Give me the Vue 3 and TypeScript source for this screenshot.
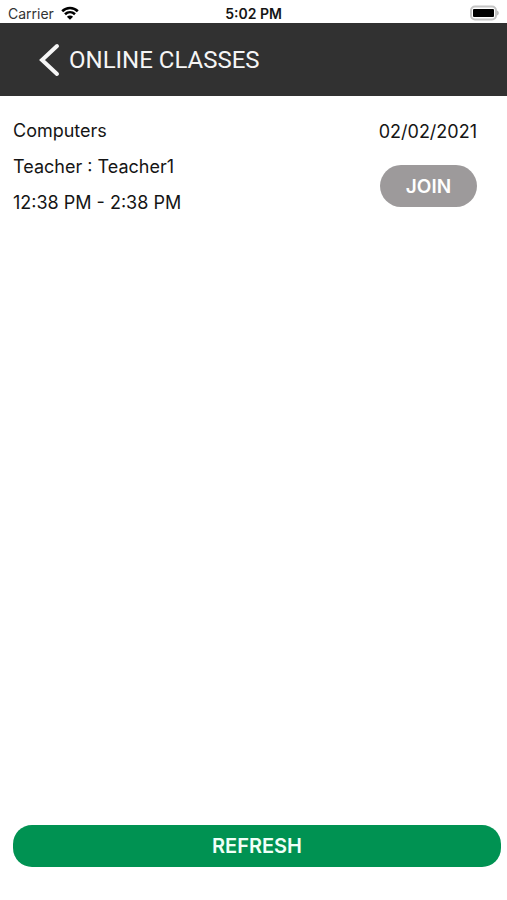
<script setup lang="ts">
import { ref } from 'vue'

interface OnlineClass {
  id: number
  subject: string
  teacher: string
  time: string
  date: string
}

const loadClasses = (): OnlineClass[] => [
  { id: 1, subject: 'Computers', teacher: 'Teacher1', time: '12:38 PM - 2:38 PM', date: '02/02/2021' },
]

const classes = ref<OnlineClass[]>(loadClasses())

function refresh(): void {
  classes.value = loadClasses()
}
</script>

<template>
  <div class="screen">
    <div class="status">
      <div class="carrier">
        <span>Carrier</span>
        <svg class="wifi" viewBox="0 0 18 14" aria-hidden="true">
          <path d="M1.2 5.2C5.6.9 12.4.9 16.8 5.2" />
          <path d="M4 8.3c2.9-2.7 7.1-2.7 10 0" />
          <path class="dot" d="M9 13.8 5.9 10.7c1.7-1.6 4.5-1.6 6.2 0Z" />
        </svg>
      </div>
      <span class="clock">5:02 PM</span>
      <svg class="battery" viewBox="0 0 30 16" aria-hidden="true">
        <rect class="shell" x="2" y="1.5" width="25" height="13" rx="4" />
        <rect x="4" y="4" width="21" height="8" rx="1" />
        <path class="cap" d="M28 5.5c2.4.8 2.4 4.2 0 5Z" />
      </svg>
    </div>

    <header class="bar">
      <button class="back" type="button" aria-label="Back">
        <svg viewBox="0 0 22 36" aria-hidden="true">
          <path d="M18 4 3 18l15 14" />
        </svg>
      </button>
      <h1>ONLINE CLASSES</h1>
    </header>

    <main class="list">
      <article v-for="item in classes" :key="item.id" class="row">
        <div class="details">
          <h2>{{ item.subject }}</h2>
          <p>Teacher : {{ item.teacher }}</p>
          <p>{{ item.time }}</p>
        </div>
        <div class="side">
          <span>{{ item.date }}</span>
          <button class="join" type="button">JOIN</button>
        </div>
      </article>
    </main>

    <footer class="actions">
      <button class="refresh" type="button" @click="refresh">REFRESH</button>
    </footer>
  </div>
</template>

<style>
body {
  margin: 0;
  background: #fff;
}
</style>

<style scoped>
.screen {
  display: flex;
  flex-direction: column;
  min-height: 100vh;
  color: #151515;
  font-family: Inter, "Liberation Sans", sans-serif;
  font-size: 18px;
}

button {
  border: 0;
  padding: 0;
  font-family: inherit;
  cursor: pointer;
}

h1,
h2,
p {
  margin: 0;
  font-size: inherit;
  font-weight: 400;
}

.status {
  display: grid;
  grid-template-columns: 1fr auto 1fr;
  align-items: center;
  height: 23px;
  padding: 3px 8px 0;
  box-sizing: border-box;
  font-size: 14px;
}

.carrier {
  display: flex;
  align-items: center;
  gap: 7px;
  color: #333;
}

.wifi {
  width: 18px;
  height: 14px;
  fill: none;
  stroke: #000;
  stroke-width: 2.6;
}

.wifi .dot {
  fill: #000;
  stroke: none;
}

.clock {
  font-weight: 600;
}

.battery {
  justify-self: end;
  width: 30px;
  height: 16px;
}

.battery .shell {
  fill: none;
  stroke: #c4c4c4;
  stroke-width: 2;
}

.battery .cap {
  fill: #bdbdbd;
}

.bar {
  display: flex;
  align-items: center;
  gap: 8px;
  height: 73px;
  padding-left: 39px;
  background: #313131;
  color: #f5f5f5;
}

.back {
  display: flex;
  background: none;
}

.back svg {
  width: 22px;
  height: 36px;
  fill: none;
  stroke: #f5f5f5;
  stroke-width: 4;
  stroke-linecap: round;
}

.bar h1 {
  font-family: Roboto, sans-serif;
  font-size: 24px;
  line-height: 30px;
}

.list {
  flex: 1;
}

.row {
  display: flex;
  justify-content: space-between;
  padding: 23px 30px 16px 13px;
}

.details {
  display: grid;
  gap: 12px;
  align-content: start;
  line-height: 24px;
}

.side {
  display: flex;
  flex-direction: column;
  align-items: flex-end;
  gap: 20px;
  line-height: 26px;
}

.join {
  width: 97px;
  height: 42px;
  border-radius: 21px;
  background: #9d9a9b;
  color: #fff;
  font-size: 19px;
  font-weight: 600;
}

.actions {
  padding: 0 6px 33px 13px;
}

.refresh {
  display: block;
  width: 100%;
  height: 42px;
  border-radius: 19px;
  background: #009252;
  color: #f0fff7;
  font-size: 20px;
  font-weight: 600;
}
</style>
